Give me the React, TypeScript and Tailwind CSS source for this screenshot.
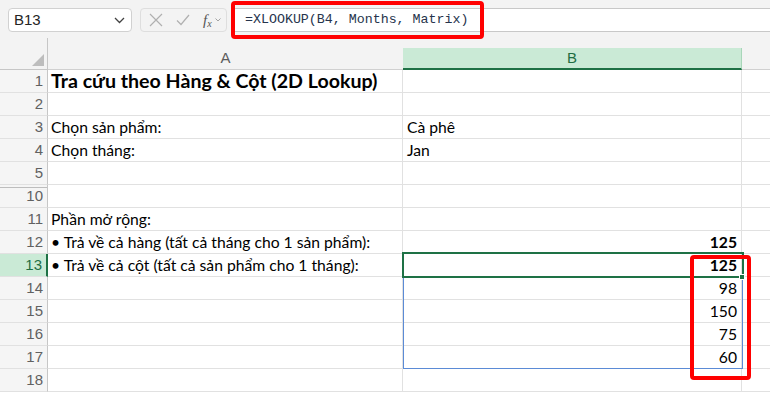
import React from 'react';

type Row = { n: number; a?: string; b?: string; bold?: boolean; title?: boolean; bRight?: boolean };

const rows: Row[] = [
  { n: 1, a: 'Tra cứu theo Hàng & Cột (2D Lookup)', title: true },
  { n: 2 },
  { n: 3, a: 'Chọn sản phẩm:', b: 'Cà phê' },
  { n: 4, a: 'Chọn tháng:', b: 'Jan' },
  { n: 5 },
  { n: 10 },
  { n: 11, a: 'Phần mở rộng:' },
  { n: 12, a: '• Trả về cả hàng (tất cả tháng cho 1 sản phẩm):', b: '125', bold: true, bRight: true },
  { n: 13, a: '• Trả về cả cột (tất cả sản phẩm cho 1 tháng):', b: '125', bold: true, bRight: true },
  { n: 14, b: '98', bRight: true },
  { n: 15, b: '150', bRight: true },
  { n: 16, b: '75', bRight: true },
  { n: 17, b: '60', bRight: true },
  { n: 18 },
];

const cellFont = { fontFamily: 'Lato, "Open Sans", sans-serif' };
const uiFont = { fontFamily: '"Liberation Sans", Arial, sans-serif' };

const App = () => {
  return (
    <div className="relative w-[770px] h-[394px] overflow-hidden bg-white">
      {/* Formula bar */}
      <div className="h-[38px] bg-[#f3f3f3] flex items-start pt-[8px] pl-[8px]" style={uiFont}>
        <div className="w-[124px] h-[24px] bg-white border border-[#d1d1d1] rounded-[4px] flex items-center justify-between pl-[5px] pr-[6px]">
          <span className="text-[15px] text-[#242424]">B13</span>
          <svg width="11" height="7" viewBox="0 0 11 7" fill="none">
            <path d="M1 1l4.5 4.5L10 1" stroke="#424242" strokeWidth="1.3" />
          </svg>
        </div>
        <div className="ml-[8px] w-[87px] h-[24px] border border-[#dedede] rounded-[4px] flex items-center pl-[8px] gap-[13px]">
          <svg width="14" height="14" viewBox="0 0 14 14" fill="none">
            <path d="M1 1l12 12M13 1L1 13" stroke="#b0b0b0" strokeWidth="1.2" />
          </svg>
          <svg width="14" height="12" viewBox="0 0 14 12" fill="none">
            <path d="M1 6.5l4 4L13 1" stroke="#b0b0b0" strokeWidth="1.2" />
          </svg>
          <div className="flex items-center gap-[3px]">
            <span className="text-[15px] italic text-[#555] leading-none" style={{ fontFamily: '"Liberation Serif", serif' }}>
              f<sub className="text-[10px]">x</sub>
            </span>
            <svg width="6" height="4" viewBox="0 0 6 4" fill="none">
              <path d="M0.5 0.5l2.5 2.5L5.5 0.5" stroke="#9a9a9a" strokeWidth="0.9" />
            </svg>
          </div>
        </div>
        <div className="ml-[5px] flex-1 h-[24px] bg-white border-y border-l border-[#c8c8c8] rounded-l-[4px] flex items-center pl-[12px]">
          <span className="text-[13.3px] text-[#26344c]" style={{ fontFamily: '"Liberation Mono", monospace' }}>
            =XLOOKUP(B4, Months, Matrix)
          </span>
        </div>
      </div>

      {/* Column headers */}
      <div className="flex bg-[#f3f3f3]" style={uiFont}>
        <div className="relative w-[48px] h-[32px] border-r border-[#c6c6c6] border-b">
          <div className="absolute right-[3px] bottom-[3px] w-0 h-0 border-l-[12px] border-l-transparent border-b-[12px] border-b-[#bdbdbd]" />
        </div>
        <div className="flex-1 flex flex-col">
          <div className="h-[10px]" />
          <div className="flex h-[22px]">
            <div className="w-[355px] border-b border-[#d0d0d0] flex items-center justify-center text-[15px] text-[#5c5c5c]">A</div>
            <div className="w-[339px] bg-[#caead6] border-b-2 border-[#1e7145] border-r border-r-[#a8d6b9] flex items-center justify-center text-[15px] text-[#1f6e43]">B</div>
            <div className="flex-1 border-b border-[#d0d0d0]" />
          </div>
        </div>
      </div>

      {/* Grid rows */}
      <div className="flex flex-col">
        {rows.map((r) => {
          const active = r.n === 13;
          let hdrExtra = '';
          if (r.n === 5) hdrExtra = ' border-b-[#bdbdbd]';
          if (r.n === 10) hdrExtra = ' shadow-[inset_0_2px_0_#f5f5f5,inset_0_3px_0_#bdbdbd]';
          return (
            <div key={r.n} className="flex h-[23px]">
              <div
                className={`w-[48px] h-[23px] border-b border-r flex items-center justify-end pr-[4px] text-[15px] ${
                  active
                    ? 'bg-[#caead6] border-b-[#e1e1e1] border-r-2 border-r-[#1e7145] text-[#1f6e43]'
                    : 'bg-[#f5f5f5] border-b-[#e1e1e1] border-r-[#c6c6c6] text-[#616161]'
                }${hdrExtra}`}
                style={uiFont}
              >
                {r.n}
              </div>
              <div
                className={`w-[355px] h-[23px] border-b border-r border-[#e1e1e1] pl-[3px] whitespace-nowrap text-black ${
                  r.title ? 'text-[19.6px] font-bold leading-[22px]' : 'text-[15.7px] leading-[22px]'
                }`}
                style={cellFont}
              >
                {r.a}
              </div>
              <div
                className={`w-[339px] h-[23px] border-b border-r border-[#e1e1e1] px-[4px] text-[15.7px] leading-[22px] text-black ${
                  r.bRight ? 'text-right' : ''
                } ${r.bold ? 'font-bold' : ''}`}
                style={cellFont}
              >
                {r.b}
              </div>
              <div className="flex-1 h-[23px] border-b border-[#e1e1e1]" />
            </div>
          );
        })}
      </div>

      {/* Selection overlays */}
      <div className="absolute left-[403px] top-[277px] w-[340px] h-[92px] border border-[#5b8bd6]" />
      <div className="absolute left-[402px] top-[252px] w-[342px] h-[26px] border-2 border-[#1e7145]" />
      <div className="absolute left-[739px] top-[274px] w-[6px] h-[6px] bg-[#1e7145] border border-white" />

      {/* Red annotation boxes */}
      <div className="absolute left-[231px] top-[1px] w-[253px] h-[38px] border-4 border-[#ff0000] rounded-[4px]" />
      <div className="absolute left-[690px] top-[255px] w-[61px] h-[125px] border-4 border-[#ff0000] rounded-[4px]" />
    </div>
  );
};

export default App;
